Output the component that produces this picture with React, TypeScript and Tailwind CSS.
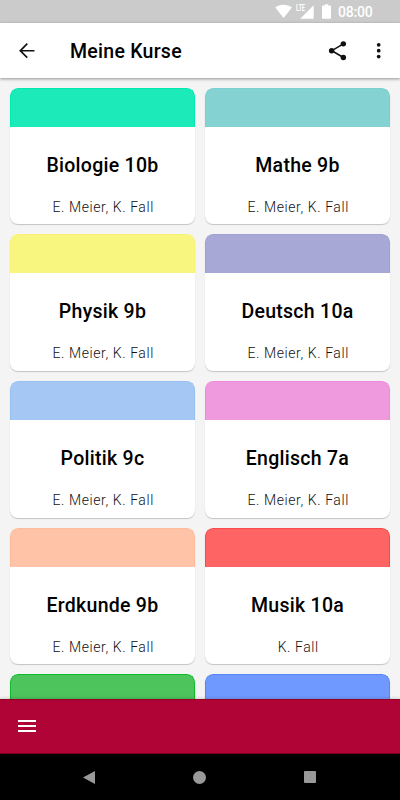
type Course = {
  name?: string;
  teachers?: string;
  color: string;
};

const courses: Course[] = [
  { name: "Biologie 10b", teachers: "E. Meier, K. Fall", color: "bg-[#1deab9] border-[#00eaae]" },
  { name: "Mathe 9b", teachers: "E. Meier, K. Fall", color: "bg-[#84d2d2] border-[#7ad0d0]" },
  { name: "Physik 9b", teachers: "E. Meier, K. Fall", color: "bg-[#f8f67e] border-[#f5f275]" },
  { name: "Deutsch 10a", teachers: "E. Meier, K. Fall", color: "bg-[#a8a8d6] border-[#a0a0d2]" },
  { name: "Politik 9c", teachers: "E. Meier, K. Fall", color: "bg-[#a4c8f3] border-[#98c1f2]" },
  { name: "Englisch 7a", teachers: "E. Meier, K. Fall", color: "bg-[#ef99df] border-[#ec8cda]" },
  { name: "Erdkunde 9b", teachers: "E. Meier, K. Fall", color: "bg-[#ffc4a7] border-[#fdbd9d]" },
  { name: "Musik 10a", teachers: "K. Fall", color: "bg-[#ff6464] border-[#f94b4b]" },
  { color: "bg-[#4dc45c] border-[#0fbb2c]" },
  { color: "bg-[#7099ff] border-[#5687f5]" },
];

const StatusBar = () => (
  <div className="flex h-[23px] shrink-0 items-center bg-[#cbcbcb] text-white">
    <svg className="ml-[275px] h-[23px] w-[17px] shrink-0" viewBox="0 0 17 23" fill="currentColor">
      <path d="M0.3 7.6C5 3.9 12 3.9 16.9 7.6L8.6 18Z" />
    </svg>
    <svg className="ml-[3px] h-[23px] w-[20px] shrink-0" viewBox="0 0 20 23" fill="currentColor">
      <path d="M18.7 5.2V18.7H5.2Z" />
      <path d="M0 4H10.5V12H0Z" fill="#cbcbcb" />
      <text
        x="1"
        y="10.8"
        fontSize="8.4"
        fontWeight="700"
        textLength="9"
        lengthAdjust="spacingAndGlyphs"
        fontFamily="Roboto, sans-serif"
      >
        LTE
      </text>
    </svg>
    <svg className="ml-[7px] h-[23px] w-[9px] shrink-0" viewBox="0 0 9 23" fill="currentColor">
      <path d="M2.7 4.2H6.2V5.6H8.1Q9 5.6 9 6.5V17.8Q9 18.7 8.1 18.7H.9Q0 18.7 0 17.8V6.5Q0 5.6.9 5.6H2.7Z" />
    </svg>
    <span className="ml-[7px] text-[14px] font-medium leading-none tracking-[-0.2px]">08:00</span>
  </div>
);

const Header = () => (
  <header className="z-10 flex h-[55px] shrink-0 items-center bg-white shadow-[0_1px_3px_rgba(0,0,0,0.4)]">
    <svg className="ml-[15px] size-[23.4px]" viewBox="0 0 24 24" fill="#111">
      <path d="M20 11.2H7.43l5.79-5.79L12 4.2l-7.8 7.8 7.8 7.8 1.21-1.21L7.43 12.8H20v-1.6z" />
    </svg>
    <h1 className="ml-[31.6px] mt-[2px] grow text-[19.5px] font-medium leading-none tracking-[0.27px]">
      Meine Kurse
    </h1>
    <svg className="mr-[18px] size-[23.4px]" viewBox="0 0 24 24" fill="#111">
      <path d="M17.8 5L6 12L17.8 19" fill="none" stroke="#111" strokeWidth="1.6" />
      <circle cx="17.8" cy="5" r="2.8" />
      <circle cx="5.8" cy="12" r="2.8" />
      <circle cx="17.8" cy="19" r="2.8" />
    </svg>
    <svg className="mr-[9.7px] size-[23.4px]" viewBox="0 0 24 24" fill="#111">
      <circle cx="12" cy="6" r="1.9" />
      <circle cx="12" cy="12" r="1.9" />
      <circle cx="12" cy="18" r="1.9" />
    </svg>
  </header>
);

const CourseCard = ({ name, teachers, color }: Course) => (
  <article className="flex h-[136.7px] flex-col overflow-hidden rounded-[8px] bg-white text-center shadow-[0_1px_1px_rgba(0,0,0,0.2)]">
    <div className={`h-[39px] shrink-0 rounded-t-[8px] border border-b-0 ${color}`} />
    {name && (
      <h2 className="mt-[27px] text-[19.5px] font-medium leading-6 tracking-[0.27px]">{name}</h2>
    )}
    {teachers && (
      <p className="mt-[19px] pl-[1.5px] text-[14px] font-light leading-5 tracking-[0.58px] text-[#111]">
        {teachers}
      </p>
    )}
  </article>
);

const App = () => {
  return (
    <div className="flex h-[800px] w-[400px] flex-col overflow-hidden bg-[#f4f4f4] font-[Roboto,sans-serif] text-black">
      <StatusBar />
      <Header />
      <main className="grid min-h-0 grow auto-rows-[136.7px] grid-cols-2 gap-[10px] overflow-hidden px-[10px] pt-[9.7px]">
        {courses.map((course) => (
          <CourseCard key={course.color} {...course} />
        ))}
      </main>
      <footer className="z-10 flex h-[55px] shrink-0 items-center border-y border-t-[#940023] border-b-[#780020] bg-[#b00336] pl-[18px] shadow-[0_-1px_3px_rgba(0,0,0,0.15)]">
        <svg className="-mt-px h-3 w-[18px]" viewBox="0 0 18 12" fill="white">
          <path d="M0 0H18V2H0ZM0 5H18V7H0ZM0 10H18V12H0Z" />
        </svg>
      </footer>
      <nav className="flex h-[46px] shrink-0 items-center bg-black">
        <svg className="ml-[83px] h-[13px] w-3" viewBox="0 0 12 13" fill="#999">
          <path d="M12 0V13L0 6.5Z" />
        </svg>
        <div className="ml-[98px] size-[13px] rounded-full bg-[#999]" />
        <div className="ml-[98px] size-3 rounded-[1px] bg-[#999]" />
      </nav>
    </div>
  );
};

export default App;
